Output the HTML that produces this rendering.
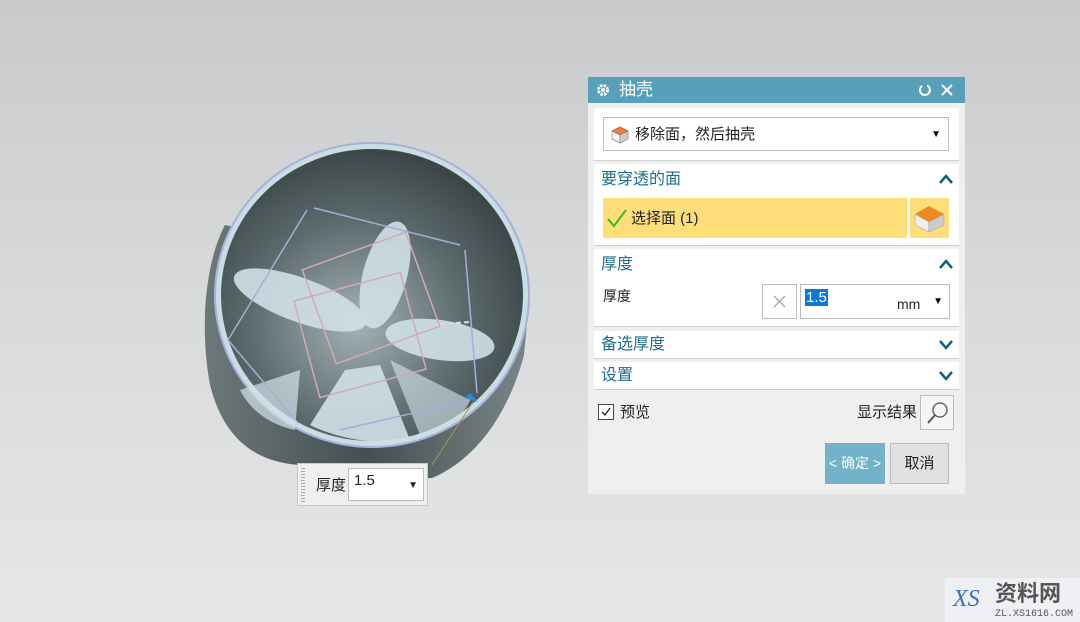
<!DOCTYPE html>
<html><head><meta charset="utf-8"><style>
body{margin:0;width:1080px;height:622px;overflow:hidden;background:linear-gradient(#c9cacc,#d9dadb 50%,#e7e7e8);font-family:"Liberation Sans","Noto Sans CJK SC",sans-serif;position:relative}
.a{position:absolute;line-height:1}
.dlg{left:588px;top:77px;width:377px;height:417px;background:#efefef}
.tb{left:0;top:0;width:377px;height:26px;background:#56a0b9;color:#fff;font-size:17px}
.sec{background:#fff;left:6px;width:365px;border-bottom:1px solid #d0d0d0}
.h{color:#1d6e8e;font-size:16px}
.car{right:6px}
</style></head><body>
<svg class="a" style="left:0;top:0" width="1080" height="622">
<defs>
<radialGradient id="inner" cx="0.45" cy="0.6" r="0.6"><stop offset="0" stop-color="#a4b2b6"/><stop offset="0.6" stop-color="#5c6a6d"/><stop offset="1" stop-color="#3c4648"/></radialGradient>
<linearGradient id="body" x1="0" x2="1"><stop offset="0" stop-color="#6c7879"/><stop offset="0.5" stop-color="#444f50"/><stop offset="1" stop-color="#7a8788"/></linearGradient>
</defs>
<path d="M225 225 C204 265 200 330 210 385 C222 432 248 458 290 464 C340 470 395 480 432 478 C475 460 508 415 524 355 L530 290 Z" fill="url(#body)"/>
<ellipse cx="372" cy="295" rx="157" ry="152" fill="#c9dde3" stroke="#a9b0dd" stroke-width="2"/>
<ellipse cx="372" cy="295" rx="151" ry="146" fill="url(#inner)"/>
<g fill="#cfe1e7" opacity="0.9">
<ellipse cx="385" cy="275" rx="22" ry="55" transform="rotate(15 385 275)"/>
<ellipse cx="300" cy="300" rx="70" ry="22" transform="rotate(20 300 300)"/>
<ellipse cx="440" cy="340" rx="55" ry="20" transform="rotate(8 440 340)"/>
<path d="M345 370 L310 425 C340 440 380 445 410 440 L380 365Z"/>
<path d="M390 360 L420 435 C445 430 465 415 470 400Z" opacity="0.7"/>
<path d="M300 370 L240 390 C250 410 270 425 295 430Z" opacity="0.8"/>
</g>
<g fill="none" stroke="#a8acdc" stroke-width="1.5">
<path d="M314 208 L460 245 M465 250 L477 393 M470 400 L340 430 M298 423 L228 340 L307 210"/>
</g>
<g fill="none" stroke="#d4a8b8" stroke-width="1.5">
<rect x="316" y="248" width="110" height="100" transform="rotate(-20 371 298)"/>
<rect x="305" y="285" width="110" height="100" transform="rotate(-15 360 335)"/>
</g>
<path d="M440 324 L470 322" stroke="#ddd" stroke-width="2" stroke-dasharray="5 3"/>
<path d="M465 398 L478 402 L470 393Z" fill="#2a8fd8"/>
<path d="M473 402 L432 465" stroke="#a89850" stroke-width="1"/>
</svg>

<div class="a" style="left:297px;top:463px;width:131px;height:43px;background:#efefef;border:1px solid #c8c8c8;box-sizing:border-box">
<div class="a" style="left:3px;top:4px;width:4px;height:34px;background:repeating-linear-gradient(#aaa 0 1px,transparent 1px 3px)"></div>
<div class="a" style="left:18px;top:14px;font-size:15px;color:#222">厚度</div>
<div class="a" style="left:50px;top:4px;width:76px;height:33px;background:#fff;border:1px solid #bbb;box-sizing:border-box;font-size:15px;color:#222;padding:4px 5px">1.5<span style="position:absolute;right:5px;top:12px;font-size:10px">▼</span></div>
</div>

<div class="a dlg">
<div class="a tb"><svg class="a" style="left:8px;top:6px" width="14" height="14"><circle cx="7" cy="7" r="4.5" fill="none" stroke="#fff" stroke-width="3" stroke-dasharray="2.4 1.2"/><circle cx="7" cy="7" r="2" fill="#fff"/></svg><span class="a" style="left:31px;top:4px">抽壳</span>
<svg class="a" style="left:330px;top:6px" width="14" height="14"><path d="M4 3 A5 5 0 1 0 9 2.5" fill="none" stroke="#fff" stroke-width="2"/></svg>
<svg class="a" style="left:352px;top:6px" width="14" height="14"><path d="M2 2L12 12M12 2L2 12" stroke="#fff" stroke-width="2"/></svg></div>
<div class="a sec" style="top:31px;height:52px">
<div class="a" style="left:9px;top:9px;width:346px;height:34px;border:1px solid #bbb;box-sizing:border-box">
<svg class="a" style="left:6px;top:7px" width="20" height="20"><path d="M10 2 L18 6 L10 10 L2 6Z" fill="#f08030" stroke="#b44" stroke-width=".7"/><path d="M2 6 L10 10 L10 18 L2 14Z" fill="#f4f4f4" stroke="#888" stroke-width=".7"/><path d="M10 10 L18 6 L18 14 L10 18Z" fill="#ccc" stroke="#888" stroke-width=".7"/></svg>
<span class="a" style="left:31px;top:9px;font-size:15px;color:#222">移除面，然后抽壳</span>
<span class="a" style="right:7px;top:12px;font-size:10px">▼</span></div></div>
<div class="a sec" style="top:87px;height:81px">
<span class="a h" style="left:7px;top:8px">要穿透的面</span><svg class="a car" style="top:10px" width="14" height="10"><path d="M1 9 L7 2 L13 9" fill="none" stroke="#0f5f7f" stroke-width="2.5"/></svg>
<div class="a" style="left:9px;top:34px;width:304px;height:40px;background:#ffde7a"><svg class="a" style="left:3px;top:9px" width="22" height="22"><path d="M2 12 L8 19 L20 3" fill="none" stroke="#2bc02b" stroke-width="2"/></svg><span class="a" style="left:28px;top:13px;font-size:15px;color:#222">选择面 (1)</span></div>
<div class="a" style="left:316px;top:34px;width:39px;height:40px;background:#ffde7a"><svg width="39" height="40"><path d="M19 8 L34 16 L19 24 L5 16Z" fill="#f08a20"/><path d="M5 16 L19 24 L19 34 L5 27Z" fill="#eee" stroke="#999" stroke-width=".5"/><path d="M19 24 L34 16 L34 27 L19 34Z" fill="#ccc" stroke="#999" stroke-width=".5"/></svg></div></div>
<div class="a sec" style="top:172px;height:77px">
<span class="a h" style="left:7px;top:8px">厚度</span><svg class="a car" style="top:10px" width="14" height="10"><path d="M1 9 L7 2 L13 9" fill="none" stroke="#0f5f7f" stroke-width="2.5"/></svg>
<span class="a" style="left:9px;top:40px;font-size:14px;color:#222">厚度</span>
<div class="a" style="left:168px;top:35px;width:35px;height:35px;border:1px solid #bbb;box-sizing:border-box"><svg width="33" height="33"><path d="M11 11L22 22M22 11L11 22" stroke="#999" stroke-width="1.2"/></svg></div>
<div class="a" style="left:206px;top:35px;width:150px;height:35px;border:1px solid #bbb;box-sizing:border-box"><span class="a" style="left:4px;top:4px;background:#0a78d7;color:#fff;font-size:15px;padding:1px 1px">1.5</span><span class="a" style="left:96px;top:12px;font-size:14px;color:#222">mm</span><span class="a" style="right:6px;top:12px;font-size:10px">▼</span></div></div>
<div class="a sec" style="top:254px;height:27px"><span class="a h" style="left:7px;top:6px">备选厚度</span><svg class="a car" style="top:9px" width="14" height="10"><path d="M1 1 L7 8 L13 1" fill="none" stroke="#0f5f7f" stroke-width="2.5"/></svg></div>
<div class="a sec" style="top:285px;height:27px"><span class="a h" style="left:7px;top:6px">设置</span><svg class="a car" style="top:9px" width="14" height="10"><path d="M1 1 L7 8 L13 1" fill="none" stroke="#0f5f7f" stroke-width="2.5"/></svg></div>
<div class="a" style="left:10px;top:327px;width:16px;height:16px;border:1px solid #444;box-sizing:border-box;background:#fff"><svg width="14" height="14"><path d="M3 7 L6 10 L11 3" fill="none" stroke="#222" stroke-width="1.3"/></svg></div>
<span class="a" style="left:32px;top:328px;font-size:15px;color:#222">预览</span>
<span class="a" style="left:269px;top:328px;font-size:15px;color:#222">显示结果</span>
<div class="a" style="left:332px;top:318px;width:34px;height:35px;border:1px solid #bbb;box-sizing:border-box;background:#f5f5f5"><svg width="34" height="35"><circle cx="19" cy="14" r="7" fill="none" stroke="#555" stroke-width="1.3"/><path d="M14 19 L7 27" stroke="#555" stroke-width="2"/></svg></div>
<div class="a" style="left:237px;top:366px;width:60px;height:41px;background:#72b3c9;color:#fff;font-size:14px;text-align:center;line-height:41px">&lt; 确定 &gt;</div>
<div class="a" style="left:302px;top:366px;width:59px;height:41px;background:#e1e1e1;border:1px solid #bbb;box-sizing:border-box;font-size:15px;text-align:center;line-height:39px;color:#222">取消</div>
</div>

<div class="a" style="left:945px;top:578px;width:135px;height:44px;background:#eef0f3">
<span class="a" style="left:8px;top:8px;font:italic 24px 'Liberation Serif',serif;color:#3a6fc0">XS</span>
<span class="a" style="left:50px;top:5px;font-size:22px;font-weight:bold;color:#555">资料网</span>
<span class="a" style="left:50px;top:31px;font:10px 'Liberation Mono',monospace;color:#555">ZL.XS1616.COM</span></div>
</body></html>
